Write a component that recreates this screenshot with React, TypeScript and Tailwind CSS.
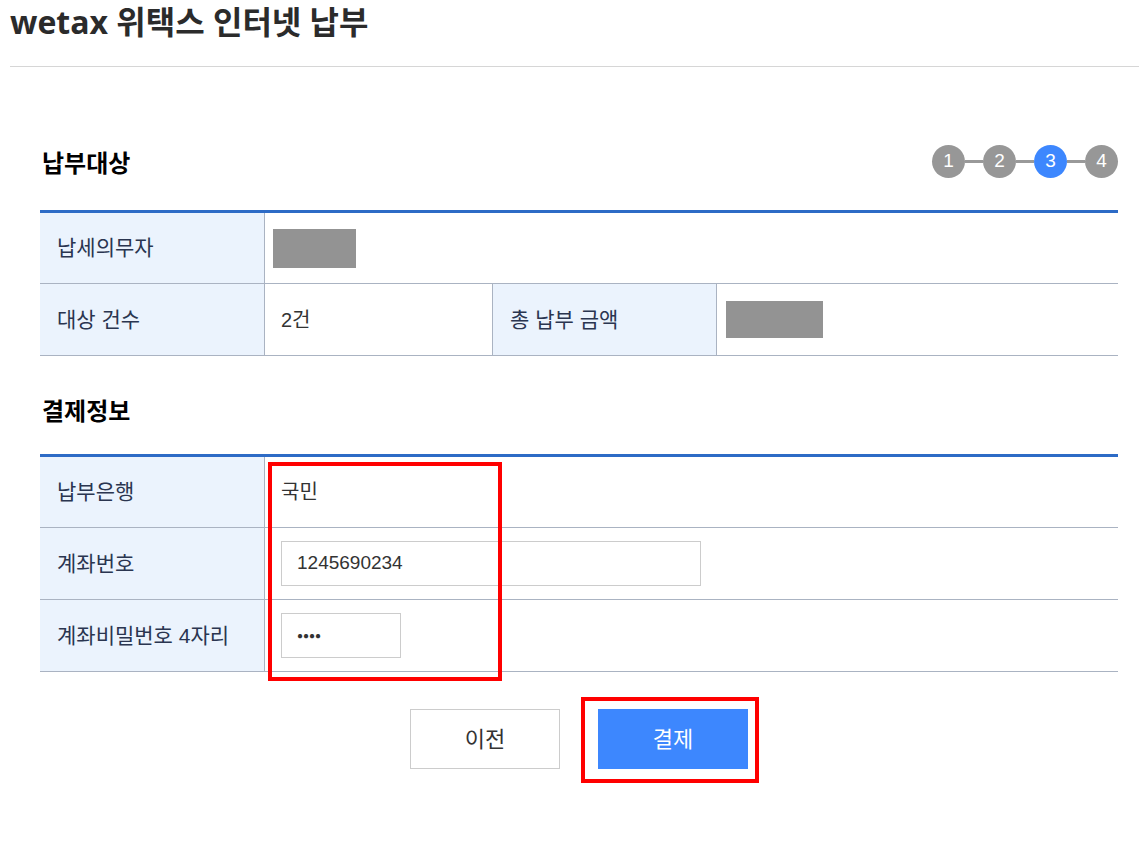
import React from 'react';

const font = { fontFamily: '"Liberation Sans", "Noto Sans CJK KR", sans-serif' };

function Steps({ active }: { active: number }) {
  const steps = [1, 2, 3, 4];
  return (
    <div className="flex items-center">
      {steps.map((n, i) => (
        <React.Fragment key={n}>
          {i > 0 && <div className="w-[18px] h-[3px] bg-[#999999]" />}
          <div
            className={
              n === active
                ? 'w-[33px] h-[33px] rounded-full bg-[#3d87fe] text-white flex items-center justify-center text-[19px]'
                : 'w-[33px] h-[33px] rounded-full bg-[#979797] text-white flex items-center justify-center text-[19px]'
            }
          >
            {n}
          </div>
        </React.Fragment>
      ))}
    </div>
  );
}

function Label({ children }: { children: React.ReactNode }) {
  return (
    <div className="w-[225px] shrink-0 bg-[#ebf3fd] border-r border-[#aab3c2] flex items-center pl-[17px] text-[21px] text-[#2a3550]">
      {children}
    </div>
  );
}

export default function App() {
  return (
    <div className="w-full min-h-[844px] bg-white text-[#333]" style={font}>
      {/* header */}
      <div className="ml-[10px] h-[67px] border-b border-[#d6d6d6]">
        <h1
          className="text-[32px] font-bold text-[#2b2b2b] leading-[44px]"
          style={{ fontFamily: '"Open Sans", "Noto Sans CJK KR", sans-serif' }}
        >
          wetax 위택스 인터넷 납부
        </h1>
      </div>

      <div className="ml-[40px] w-[1078px]">
        {/* 납부대상 */}
        <div className="mt-[77px] h-[35px] flex items-center justify-between">
          <h2 className="ml-[2px] text-[24px] font-bold text-black" style={{ fontFamily: '"Noto Sans CJK KR", sans-serif' }}>
            납부대상
          </h2>
          <Steps active={3} />
        </div>

        <div className="mt-[31px] border-t-[3px] border-[#2d6bc6]">
          <div className="h-[71px] flex border-b border-[#aab3c2]">
            <Label>납세의무자</Label>
            <div className="flex-1 flex items-start pl-[8px] pt-[16px]">
              <div className="w-[83px] h-[39px] bg-[#939393]" />
            </div>
          </div>
          <div className="h-[72px] flex border-b border-[#aab3c2]">
            <Label>대상 건수</Label>
            <div className="w-[227px] shrink-0 flex items-center pl-[16px] text-[20px] text-[#333]">2건</div>
            <div className="w-[225px] shrink-0 bg-[#ebf3fd] border-l border-r border-[#aab3c2] flex items-center pl-[17px] text-[21px] text-[#2a3550]">
              총 납부 금액
            </div>
            <div className="flex-1 flex items-start pl-[9px] pt-[17px]">
              <div className="w-[97px] h-[37px] bg-[#939393]" />
            </div>
          </div>
        </div>

        {/* 결제정보 */}
        <h2 className="mt-[34px] ml-[2px] h-[40px] flex items-center text-[24px] font-bold text-black" style={{ fontFamily: '"Noto Sans CJK KR", sans-serif' }}>
          결제정보
        </h2>

        <div className="relative mt-[24px] border-t-[3px] border-[#2d6bc6]">
          <div className="h-[71px] flex border-b border-[#aab3c2]">
            <Label>납부은행</Label>
            <div className="flex-1 flex items-center pl-[16px] text-[20px] text-[#333]">국민</div>
          </div>
          <div className="h-[72px] flex border-b border-[#aab3c2]">
            <Label>계좌번호</Label>
            <div className="flex-1 flex items-center pl-[16px]">
              <div className="w-[420px] h-[45px] border border-[#cccccc] flex items-center pl-[15px] text-[19px] text-[#333]">
                1245690234
              </div>
            </div>
          </div>
          <div className="h-[72px] flex border-b border-[#aab3c2]">
            <Label>계좌비밀번호 4자리</Label>
            <div className="flex-1 flex items-center pl-[16px]">
              <div className="w-[120px] h-[45px] border border-[#cccccc] flex items-center pl-[15px] text-[10px] text-[#333]">
                ●●●●
              </div>
            </div>
          </div>
          {/* annotation */}
          <div className="absolute left-[228px] top-[5px] w-[234px] h-[219px] border-[4px] border-[#ff0000]" />
        </div>

        {/* buttons */}
        <div className="mt-[37px] flex justify-center gap-[38px]">
          <button className="w-[150px] h-[60px] border border-[#cccccc] bg-white text-[22px] text-[#333]">이전</button>
          <div className="relative">
            <button className="w-[150px] h-[60px] bg-[#3d87fe] text-[22px] text-white">결제</button>
            <div className="absolute left-[-17px] top-[-12px] w-[178px] h-[86px] border-[4px] border-[#ff0000]" />
          </div>
        </div>
      </div>
    </div>
  );
}
